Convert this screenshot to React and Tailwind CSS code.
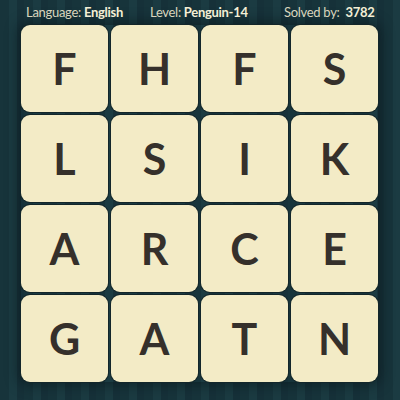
import React from 'react';

const rows = [
  ['F', 'H', 'F', 'S'],
  ['L', 'S', 'I', 'K'],
  ['A', 'R', 'C', 'E'],
  ['G', 'A', 'T', 'N'],
];

const Tile = ({ letter }) => (
  <div className="w-[87px] h-[87px] rounded-[9px] bg-[#f3ebc6] shadow-[0_0_0_1px_#13262a] flex items-center justify-center">
    <span className="text-[43px] font-bold leading-none text-[#35302b]">{letter}</span>
  </div>
);

const App = () => {
  return (
    <div
      className="w-[400px] h-[400px] overflow-hidden bg-[repeating-linear-gradient(90deg,#17343b_0px,#17343b_9px,#1b3b42_9px,#1b3b42_17px,#163139_17px,#163139_24px)] font-['Lato','Noto_Sans',sans-serif]"
    >
      <div className="h-[25px] flex items-center text-[13px] tracking-[-0.3px] text-[#d9d5bd] pl-[26px]">
        <div className="w-[124px]">
          Language: <span className="font-bold text-[#f4efd6]">English</span>
        </div>
        <div className="w-[134px]">
          Level: <span className="font-bold text-[#f4efd6]">Penguin-14</span>
        </div>
        <div>
          Solved by: <span className="font-bold text-[#f4efd6] ml-[3px]">3782</span>
        </div>
      </div>
      <div className="ml-[21px] grid grid-cols-4 gap-[3px] w-fit shadow-[0_0_12px_4px_rgba(8,20,24,0.5)] rounded-[9px]">
        {rows.flat().map((l, i) => (
          <Tile key={i} letter={l} />
        ))}
      </div>
    </div>
  );
};

export default App;
